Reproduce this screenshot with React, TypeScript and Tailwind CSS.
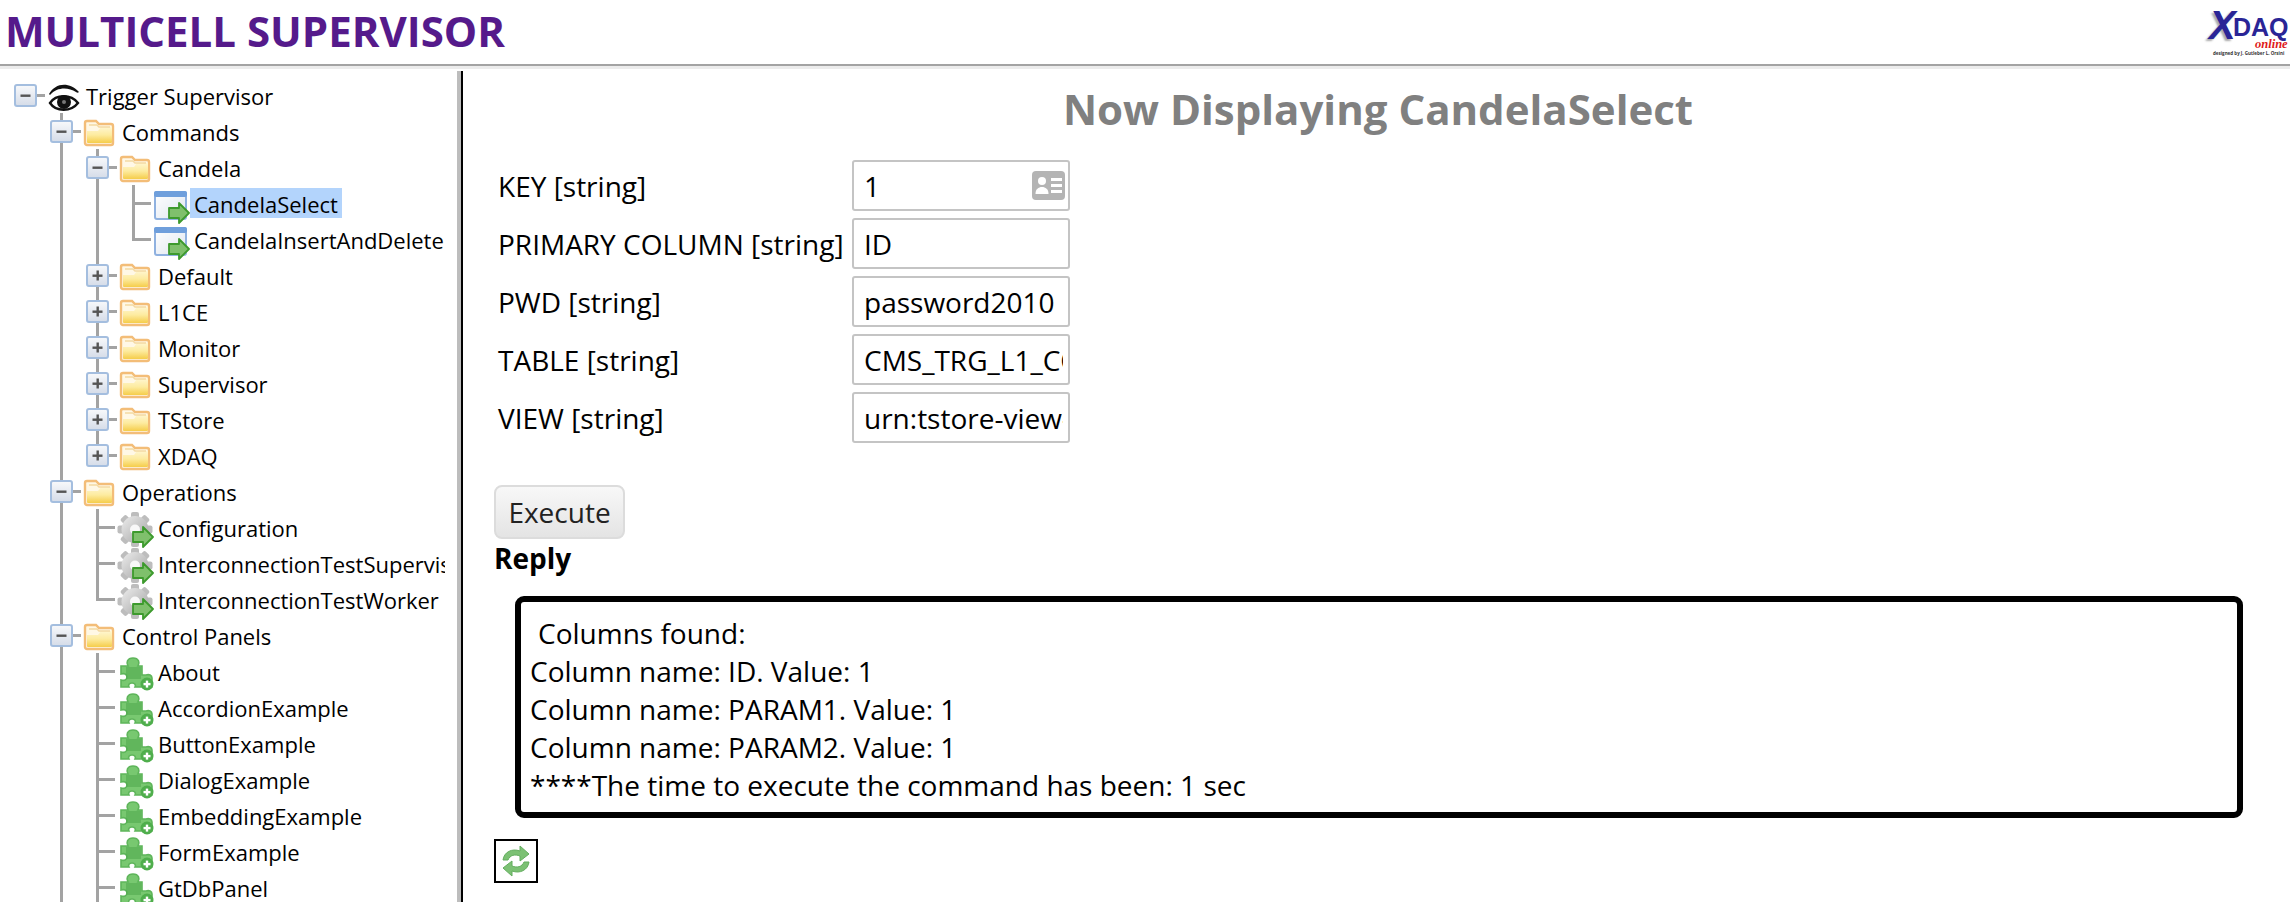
import React from 'react';

type Guide = 'none' | 'line' | 'tee' | 'ell';
type IconKind = 'eye' | 'folder' | 'page' | 'gear' | 'puzzle';

type Row = {
  guides: Guide[];
  toggle?: '+' | '-';
  toggleLast?: boolean;
  icon: IconKind;
  label: string;
  selected?: boolean;
};

const l1: Guide[] = ['none', 'line'];
const l2: Guide[] = ['none', 'line', 'line'];

const rows: Row[] = [
  { guides: [], toggle: '-', icon: 'eye', label: 'Trigger Supervisor' },
  { guides: ['none'], toggle: '-', icon: 'folder', label: 'Commands' },
  { guides: l1, toggle: '-', icon: 'folder', label: 'Candela' },
  { guides: [...l2, 'tee'], icon: 'page', label: 'CandelaSelect', selected: true },
  { guides: [...l2, 'ell'], icon: 'page', label: 'CandelaInsertAndDelete' },
  { guides: l1, toggle: '+', icon: 'folder', label: 'Default' },
  { guides: l1, toggle: '+', icon: 'folder', label: 'L1CE' },
  { guides: l1, toggle: '+', icon: 'folder', label: 'Monitor' },
  { guides: l1, toggle: '+', icon: 'folder', label: 'Supervisor' },
  { guides: l1, toggle: '+', icon: 'folder', label: 'TStore' },
  { guides: l1, toggle: '+', toggleLast: true, icon: 'folder', label: 'XDAQ' },
  { guides: ['none'], toggle: '-', icon: 'folder', label: 'Operations' },
  { guides: [...l1, 'tee'], icon: 'gear', label: 'Configuration' },
  { guides: [...l1, 'tee'], icon: 'gear', label: 'InterconnectionTestSupervisor' },
  { guides: [...l1, 'ell'], icon: 'gear', label: 'InterconnectionTestWorker' },
  { guides: ['none'], toggle: '-', icon: 'folder', label: 'Control Panels' },
  { guides: [...l1, 'tee'], icon: 'puzzle', label: 'About' },
  { guides: [...l1, 'tee'], icon: 'puzzle', label: 'AccordionExample' },
  { guides: [...l1, 'tee'], icon: 'puzzle', label: 'ButtonExample' },
  { guides: [...l1, 'tee'], icon: 'puzzle', label: 'DialogExample' },
  { guides: [...l1, 'tee'], icon: 'puzzle', label: 'EmbeddingExample' },
  { guides: [...l1, 'tee'], icon: 'puzzle', label: 'FormExample' },
  { guides: [...l1, 'tee'], icon: 'puzzle', label: 'GtDbPanel' },
];

const fields = [
  { label: 'KEY [string]', value: '1', card: true },
  { label: 'PRIMARY COLUMN [string]', value: 'ID' },
  { label: 'PWD [string]', value: 'password2010' },
  { label: 'TABLE [string]', value: 'CMS_TRG_L1_CONF' },
  { label: 'VIEW [string]', value: 'urn:tstore-view-SQL:MyView' },
];

const reply = [
  'Column name: ID. Value: 1',
  'Column name: PARAM1. Value: 1',
  'Column name: PARAM2. Value: 1',
  '****The time to execute the command has been: 1 sec',
];

// tree connector cell
const GuideCell = ({ kind }: { kind: Guide }) => (
  <svg width="36" height="36" className="shrink-0">
    {kind === 'line' && <rect x="17" y="0" width="3" height="36" fill="#a3a3a3" />}
    {kind === 'tee' && (
      <>
        <rect x="17" y="0" width="3" height="36" fill="#a3a3a3" />
        <rect x="17" y="17" width="22" height="3" fill="#a3a3a3" />
      </>
    )}
    {kind === 'ell' && (
      <>
        <rect x="17" y="0" width="3" height="20" fill="#a3a3a3" />
        <rect x="17" y="17" width="22" height="3" fill="#a3a3a3" />
      </>
    )}
  </svg>
);

const ToggleCell = ({ sign, root, last }: { sign: '+' | '-'; root: boolean; last?: boolean }) => (
  <svg width="38" height="36" className="shrink-0 -mr-[2px]">
    <defs>
      <linearGradient id="tg" x1="0" y1="0" x2="0" y2="1">
        <stop offset="0" stopColor="#f8f9fb" />
        <stop offset="1" stopColor="#d5dce8" />
      </linearGradient>
    </defs>
    {!root && <rect x="17" y="0" width="3" height={last ? 18 : 36} fill="#a3a3a3" />}
    <rect x="17" y="17" width="21" height="3" fill="#a3a3a3" />
    <rect x="8" y="8" width="21" height="21" rx="2" fill="url(#tg)" stroke="#a4bedf" strokeWidth="2" />
    <rect x="13.5" y="17.5" width="10" height="2.4" fill="#555" />
    {sign === '+' && <rect x="17.5" y="13.5" width="2.4" height="10" fill="#555" />}
  </svg>
);

const FolderIcon = () => (
  <svg width="36" height="36" viewBox="0 0 36 36">
    <defs>
      <linearGradient id="fo" x1="0" y1="0" x2="0" y2="1">
        <stop offset="0" stopColor="#fff6cf" />
        <stop offset="0.5" stopColor="#fdeb9f" />
        <stop offset="1" stopColor="#f5cd4a" />
      </linearGradient>
    </defs>
    <path d="M4 10a2 2 0 0 1 2-2h9l3 3h12a2 2 0 0 1 2 2v17a2 2 0 0 1-2 2H6a2 2 0 0 1-2-2z" fill="#fff8e6" stroke="#f3bd78" strokeWidth="2.4" />
    <path d="M6 18h11l3-4h11v15a1 1 0 0 1-1 1H7a1 1 0 0 1-1-1z" fill="url(#fo)" />
    <path d="M8 12h8l2 2h11" fill="none" stroke="#f4d9a2" strokeWidth="1.6" />
  </svg>
);

const EyeIcon = () => (
  <svg width="36" height="36" viewBox="0 0 36 36">
    <path d="M4 17C10 6 24 4 34 15 33 16 32 16 31 15 23 10 12 10 5 18z" fill="#111" />
    <path d="M5 26C11 17 26 17 33 26 26 35 11 35 5 26z" fill="#fff" stroke="#111" strokeWidth="2.4" />
    <circle cx="19" cy="25" r="7" fill="#111" />
    <circle cx="19" cy="25" r="2" fill="#777" />
  </svg>
);

const GreenArrow = ({ x, y }: { x: number; y: number }) => (
  <path
    transform={`translate(${x} ${y})`}
    d="M1 5h10V0l10 10-10 10v-5H1z"
    fill="#7fc06c"
    stroke="#3d9a2d"
    strokeWidth="1.8"
    strokeLinejoin="round"
  />
);

const PageIcon = () => (
  <svg width="36" height="36" viewBox="0 0 36 36" className="overflow-visible">
    <defs>
      <linearGradient id="pg" x1="0" y1="0" x2="1" y2="1">
        <stop offset="0" stopColor="#ffffff" />
        <stop offset="1" stopColor="#dfe6f0" />
      </linearGradient>
    </defs>
    <rect x="2" y="7" width="31" height="27" rx="2" fill="url(#pg)" stroke="#8fb1e0" strokeWidth="2" />
    <rect x="1" y="6" width="33" height="6" rx="2" fill="#6f9fdc" />
    <GreenArrow x={15} y={18} />
  </svg>
);

const GearIcon = () => {
  const teeth = [0, 45, 90, 135];
  return (
    <svg width="36" height="36" viewBox="0 0 36 36" className="overflow-visible">
      <defs>
        <linearGradient id="gr" x1="0" y1="0" x2="1" y2="1">
          <stop offset="0" stopColor="#ededed" />
          <stop offset="1" stopColor="#a2a2a2" />
        </linearGradient>
      </defs>
      {teeth.map((a) => (
        <rect key={a} x="14" y="3" width="8" height="35" rx="2" fill="#bdbdbd" transform={`rotate(${a} 18 20.5)`} />
      ))}
      <circle cx="18" cy="20.5" r="13.5" fill="url(#gr)" />
      <circle cx="18" cy="20.5" r="5" fill="#f8f8f8" />
      <GreenArrow x={15} y={18} />
    </svg>
  );
};

const PuzzleIcon = () => (
  <svg width="36" height="36" viewBox="0 0 36 36" className="overflow-visible">
    <path
      d="M4 13h7c-2-3-1-8 5-8s7 5 5 8h4v9h4c3-1 6 0 6 3v9H18c1-2 0-4-3-4s-4 2-3 4H4v-7c3 1 6 0 6-3s-3-4-6-3z"
      fill="#78c870"
      stroke="#5eb55a"
      strokeWidth="1.6"
    />
    <rect x="9" y="14" width="15" height="12" fill="#4fa84c" opacity="0.55" />
    <circle cx="30" cy="31" r="6.5" fill="#4fae4c" />
    <rect x="26.5" y="29.9" width="7" height="2.4" fill="#fff" />
    <rect x="28.8" y="27.6" width="2.4" height="7" fill="#fff" />
  </svg>
);

const icons: Record<IconKind, React.ReactNode> = {
  eye: <EyeIcon />,
  folder: <FolderIcon />,
  page: <PageIcon />,
  gear: <GearIcon />,
  puzzle: <PuzzleIcon />,
};

const TreeRow = ({ row }: { row: Row }) => (
  <div className="flex h-[36px] items-center">
    {row.guides.map((g, i) => (
      <GuideCell key={i} kind={g} />
    ))}
    {row.toggle && <ToggleCell sign={row.toggle} root={row.guides.length === 0} last={row.toggleLast} />}
    <div className="ml-[2px] h-[36px] w-[36px] shrink-0 blur-[0.4px]">{icons[row.icon]}</div>
    <span
      className={`ml-px flex h-[30px] items-center whitespace-nowrap px-1 pt-[3px] text-[22px] text-black ${
        row.selected ? 'bg-[#b3d4fc]' : ''
      }`}
    >
      {row.label}
    </span>
  </div>
);

const Logo = () => (
  <div className="relative h-[60px] w-[88px] shrink-0 overflow-hidden">
    <span className="absolute left-[7px] top-[5px] text-[40px] font-bold italic leading-none text-[#2a2596] [font-family:'Liberation_Sans',sans-serif] [text-shadow:-2px_2px_2px_#aaa]">
      X
    </span>
    <span className="absolute left-[31px] top-[15px] text-[25px] font-bold leading-none text-[#2a2596] [font-family:'Liberation_Sans',sans-serif]">
      DAQ
    </span>
    <span className="absolute left-[53px] top-[38px] text-[12.5px] font-bold italic leading-none text-[#e01b1b] [font-family:'Liberation_Serif',serif]">
      online
    </span>
    <span className="absolute left-[11px] top-[51px] whitespace-nowrap text-[4.5px] font-bold leading-none text-[#333]">
      designed by J. Gutleber L. Orsini
    </span>
  </div>
);

const CardIcon = () => (
  <svg width="33" height="29" viewBox="0 0 33 29">
    <rect width="33" height="29" rx="4" fill="#b4b4b4" />
    <circle cx="10" cy="10" r="4" fill="#fff" />
    <path d="M3.5 23c0-5 3-7 6.5-7s6.500 2 6.500 7z" fill="#fff" />
    <rect x="19" y="7" width="11" height="3" fill="#fff" />
    <rect x="19" y="13" width="11" height="3" fill="#fff" />
    <rect x="19" y="19" width="11" height="3" fill="#fff" />
  </svg>
);

const RefreshIcon = () => (
  <svg width="34" height="36" viewBox="0 0 34 36" className="blur-[0.4px]">
    <path d="M4 17C5 9 13 5 21 8V3l9 8-9 7v-5c-5-2-10-1-12 4z" fill="#7cc174" stroke="#63ad5e" strokeWidth="1" />
    <path d="M30 19c-1 8-9 12-17 9v5l-9-8 9-7v5c5 2 10 1 12-4z" fill="#7cc174" stroke="#63ad5e" strokeWidth="1" />
  </svg>
);

export default function App() {
  return (
    <div className="h-[902px] w-[2290px] overflow-hidden bg-white font-['Open_Sans',sans-serif] text-black">
      <header className="flex h-[66px] items-start justify-between border-b-2 border-[#a3a3a3]">
        <h1 className="ml-[5px] mt-[5px] text-[42px] font-bold leading-[52px] text-[#551a8b]">MULTICELL SUPERVISOR</h1>
        <Logo />
      </header>
      <div className="h-[3px] bg-[#ececec]" />
      <div className="flex h-[833px]">
        <aside className="mt-[2px] w-[463px] shrink-0 border-r-2 border-black">
          <div className="h-full border-r-4 border-[#bdbdbd] pr-[12px]">
            <div className="h-full overflow-hidden pl-[7px] pt-[6px]">
              {rows.map((row) => (
                <TreeRow key={row.label} row={row} />
              ))}
            </div>
          </div>
        </aside>
        <main className="min-w-0 flex-1 pl-[31px] pr-[47px]">
          <h2 className="-mr-[19px] mt-[16px] text-center text-[42px] font-bold leading-[48px] text-[#808080]">
            Now Displaying CandelaSelect
          </h2>
          <div className="mt-[27px] flex flex-col gap-[7px]">
            {fields.map((f) => (
              <div key={f.label} className="flex h-[51px] items-center">
                <label className="w-[358px] shrink-0 whitespace-nowrap pl-[4px] text-[28px]">{f.label}</label>
                <div className="relative w-[218px]">
                  <input
                    readOnly
                    value={f.value}
                    className="h-[51px] w-full rounded-[3px] border-2 border-[#c4c4c4] bg-white pl-[10px] pr-[5px] text-[28px] text-black"
                  />
                  {f.card && (
                    <div className="absolute right-[5px] top-[11px]">
                      <CardIcon />
                    </div>
                  )}
                </div>
              </div>
            ))}
          </div>
          <button className="mt-[42px] block h-[54px] w-[131px] rounded-[8px] border-2 border-[#dcdcdc] bg-gradient-to-b from-[#f8f8f8] to-[#e4e4e4] text-[28px] text-[#222]">
            Execute
          </button>
          <div className="-mt-px text-[28px] font-bold leading-[40px]">Reply</div>
          <div className="ml-[21px] mt-[18px] h-[222px] rounded-[9px] border-[6px] border-black px-[9px] pt-[12px] text-[28px] leading-[38px]">
            <div className="pl-[8px]">Columns found:</div>
            {reply.map((line) => (
              <div key={line}>{line}</div>
            ))}
          </div>
          <div className="mt-[21px] flex h-[44px] w-[44px] items-center justify-center border-2 border-black">
            <RefreshIcon />
          </div>
        </main>
      </div>
    </div>
  );
}
